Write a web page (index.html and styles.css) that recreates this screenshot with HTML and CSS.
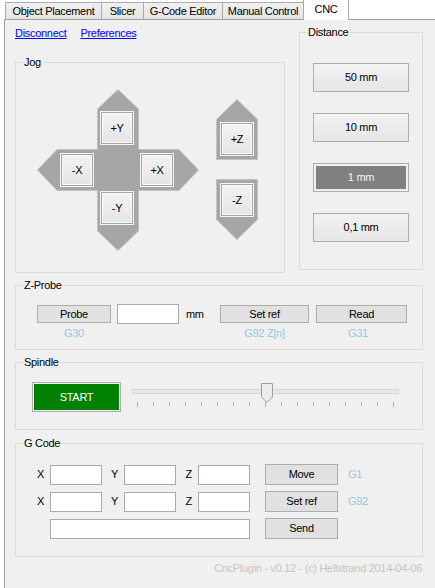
FILE: index.html
```html
<!DOCTYPE html>
<html>
<head>
<meta charset="utf-8">
<title>CNC</title>
<link rel="stylesheet" href="styles.css">
</head>
<body>
<div class="tabs">
  <div class="tab tab-obj">Object Placement</div>
  <div class="tab tab-slicer">Slicer</div>
  <div class="tab tab-gcode">G-Code Editor</div>
  <div class="tab tab-manual">Manual Control</div>
  <div class="tab tab-cnc active">CNC</div>
</div>
<div class="page">
  <div class="top">
    <div class="left-col">
      <div class="links"><a href="#">Disconnect</a><a href="#">Preferences</a></div>
      <div class="group jog">
        <div class="group-title">Jog</div>
        <div class="jog-body">
          <div class="dpad">
            <svg class="shape" width="162" height="162" viewBox="0 0 162 162"><polygon points="81,0.5 101.5,20 101.5,60.5 142,60.5 161.5,81 142,101.5 101.5,101.5 101.5,142 81,161.5 60.5,142 60.5,101.5 20,101.5 0.5,81 20,60.5 60.5,60.5 60.5,20"/></svg>
            <button class="jbtn py">+Y</button>
            <button class="jbtn mx">-X</button>
            <button class="jbtn px">+X</button>
            <button class="jbtn my">-Y</button>
          </div>
          <div class="zcol">
            <div class="zarrow">
              <svg class="shape" width="42" height="61" viewBox="0 0 42 61"><polygon points="21,0.5 41.5,20.5 41.5,60.5 0.5,60.5 0.5,20.5"/></svg>
              <button class="jbtn pz">+Z</button>
            </div>
            <div class="zarrow">
              <svg class="shape" width="42" height="61" viewBox="0 0 42 61"><polygon points="0.5,0.5 41.5,0.5 41.5,40.5 21,60.5 0.5,40.5"/></svg>
              <button class="jbtn mz">-Z</button>
            </div>
          </div>
        </div>
      </div>
    </div>
    <div class="group distance">
      <div class="group-title">Distance</div>
      <div class="dist-list">
        <button class="dbtn">50 mm</button>
        <button class="dbtn">10 mm</button>
        <button class="dbtn selected"><span>1 mm</span></button>
        <button class="dbtn">0,1 mm</button>
      </div>
    </div>
  </div>

  <div class="group zprobe">
    <div class="group-title">Z-Probe</div>
    <div class="zp-grid">
      <button class="btn zp-probe">Probe</button>
      <input class="field zp-input" type="text">
      <span class="zp-mm">mm</span>
      <button class="btn zp-setref">Set ref</button>
      <button class="btn zp-read">Read</button>
      <span class="gcode-hint c1">G30</span>
      <span class="gcode-hint c4">G92 Z[n]</span>
      <span class="gcode-hint c5">G31</span>
    </div>
  </div>

  <div class="group spindle">
    <div class="group-title">Spindle</div>
    <div class="sp-row">
      <button class="start"><span>START</span></button>
      <div class="slider">
        <div class="track"></div>
        <svg class="thumb" width="12" height="20" viewBox="0 0 12 20"><polygon points="0.5,0.5 11.5,0.5 11.5,14 6,19.5 0.5,14"/></svg>
        <div class="ticks">
          <i class="tick end"></i><i class="tick"></i><i class="tick"></i><i class="tick"></i><i class="tick"></i><i class="tick"></i><i class="tick"></i><i class="tick"></i><i class="tick end"></i><i class="tick"></i><i class="tick"></i><i class="tick"></i><i class="tick"></i><i class="tick"></i><i class="tick"></i><i class="tick"></i><i class="tick end"></i>
        </div>
      </div>
    </div>
  </div>

  <div class="group gcode">
    <div class="group-title">G Code</div>
    <div class="gc-grid">
      <span class="axis">X</span><input class="field" type="text">
      <span class="axis">Y</span><input class="field" type="text">
      <span class="axis">Z</span><input class="field" type="text">
      <span></span><button class="btn">Move</button><span class="gcode-hint gc-hint">G1</span>

      <span class="axis">X</span><input class="field" type="text">
      <span class="axis">Y</span><input class="field" type="text">
      <span class="axis">Z</span><input class="field" type="text">
      <span></span><button class="btn">Set ref</button><span class="gcode-hint gc-hint">G92</span>

      <span></span><input class="field wide" type="text">
      <span></span><button class="btn">Send</button>
    </div>
  </div>

  <div class="footer">CncPlugin - v0.12 - (c) Hellstrand 2014-04-06</div>
</div>
</body>
</html>
```

FILE: styles.css
```css
* { box-sizing: border-box; }

html, body {
  margin: 0;
  padding: 0;
}

body {
  width: 435px;
  height: 588px;
  overflow: hidden;
  background: #ffffff;
  font-family: "Liberation Sans", Arial, sans-serif;
  font-size: 11px;
  line-height: 13px;
  letter-spacing: -0.3px;
  color: #000;
}

button, input {
  font: inherit;
  letter-spacing: inherit;
  color: inherit;
  margin: 0;
  padding: 0;
}

/* ---------- tabs ---------- */
.tabs {
  display: flex;
  align-items: flex-end;
  height: 19px;
  padding-left: 5px;
}

.tab {
  height: 17px;
  border: 1px solid #acacac;
  border-bottom: none;
  background: linear-gradient(#f0f0f0, #e5e5e5);
  text-align: center;
  line-height: 16px;
  margin-left: -1px;
  white-space: nowrap;
}

.tab:first-child { margin-left: 0; }
.tab-obj { width: 97px; }
.tab-slicer { width: 43px; }
.tab-gcode { width: 80px; }
.tab-manual { width: 82px; }

.tab.active {
  position: relative;
  z-index: 1;
  width: 46px;
  height: 20px;
  margin-bottom: -1px;
  border-top: none;
  background: #ffffff;
  line-height: 19px;
}

/* ---------- page ---------- */
.page {
  margin-left: 4px;
  height: 569px;
  border-left: 1px solid #9a9a9a;
  border-top: 1px solid #a0a0a0;
  background: #f0f0f0;
  padding: 0 12px 0 10px;
}

.top {
  display: flex;
  justify-content: space-between;
  align-items: flex-start;
}

.left-col { width: 270px; }

.links {
  padding-top: 7px;
  display: flex;
}

.links a {
  color: #0000ff;
  text-decoration: underline;
  margin-right: 14px;
}

/* ---------- group boxes ---------- */
.group {
  border: 1px solid #dcdcdc;
}

.group-title {
  display: table;
  margin: -7px 0 0 7px;
  padding: 0 1px;
  background: #f0f0f0;
  line-height: 13px;
}

.jog {
  margin-top: 22px;
  height: 211px;
}

.distance {
  margin-top: 12px;
  width: 124px;
  height: 238px;
}

.zprobe {
  margin-top: 12px;
  height: 65px;
}

.spindle {
  margin-top: 12px;
  height: 68px;
}

.gcode {
  margin-top: 13px;
  height: 114px;
}

/* ---------- jog ---------- */
.jog-body {
  display: flex;
  align-items: flex-start;
  padding: 20px 0 0 21px;
}

.dpad {
  position: relative;
  width: 162px;
  height: 162px;
}

.shape {
  position: absolute;
  left: 0;
  top: 0;
  display: block;
}

.shape polygon {
  fill: #a6a6a6;
  stroke: #c2c2c2;
  stroke-width: 1;
}

.jbtn {
  position: absolute;
  width: 34px;
  height: 34px;
  border: 1px solid #f6f6f6;
  box-shadow: inset 0 0 0 1px #a3a3a3, inset 0 0 0 2px #fbfbfb;
  background: linear-gradient(#f3f3f3, #e4e4e4);
  text-align: center;
  line-height: 30px;
}

.py { left: 63px; top: 22px; }
.mx { left: 23px; top: 64px; }
.px { left: 103px; top: 64px; }
.my { left: 63px; top: 102px; }

.zcol {
  margin: 10px 0 0 17px;
  display: flex;
  flex-direction: column;
  gap: 19px;
}

.zarrow {
  position: relative;
  width: 42px;
  height: 61px;
}

.pz { left: 4px; top: 23px; }
.mz { left: 4px; top: 4px; }

/* ---------- distance ---------- */
.dist-list {
  display: flex;
  flex-direction: column;
  gap: 21px;
  padding: 24px 0 0 13px;
}

.dbtn {
  width: 96px;
  height: 29px;
  border: 1px solid #adadad;
  background: linear-gradient(#f2f2f2, #e6e6e6);
  text-align: center;
}

.dbtn.selected {
  padding: 2px;
  background: #f0f0f0;
}

.dbtn.selected span {
  display: block;
  height: 100%;
  background: #808080;
  color: #f4f4f4;
  line-height: 23px;
}

/* ---------- generic controls ---------- */
.btn {
  border: 1px solid #adadad;
  background: #e1e1e1;
  text-align: center;
}

.field {
  height: 20px;
  border: 1px solid #a9a9a9;
  background: #ffffff;
  outline: none;
}

.gcode-hint {
  color: #8ecbe6;
}

/* ---------- z-probe ---------- */
.zp-grid {
  display: grid;
  grid-template-columns: 74px 68px 41px 96px 91px;
  grid-template-rows: 20px 13px;
  row-gap: 3px;
  align-items: center;
  padding: 12px 0 0 21px;
}

.zp-grid .btn { height: 18px; }
.zp-probe { width: 74px; }
.zp-input { width: 62px; margin-left: 6px; }
.zp-mm { margin-left: 7px; }
.zp-setref { width: 89px; }
.zp-read { width: 91px; }

.c1 { grid-column: 1; justify-self: center; }
.c4 { grid-column: 4; width: 89px; text-align: center; }
.c5 { grid-column: 5; margin-left: 32px; }

/* ---------- spindle ---------- */
.sp-row {
  display: flex;
  align-items: flex-start;
  padding: 13px 0 0 16px;
}

.start {
  width: 89px;
  height: 30px;
  border: 1px solid #adadad;
  padding: 1px;
  background: #f0f0f0;
}

.start span {
  display: block;
  height: 100%;
  background: #008000;
  color: #ffffff;
  line-height: 26px;
  text-align: center;
}

.slider {
  position: relative;
  width: 267px;
  height: 25px;
  margin: 1px 0 0 11px;
}

.track {
  margin-top: 6px;
  height: 5px;
  border: 1px solid #d6d6d6;
  background: #e7e7e7;
}

.thumb {
  position: absolute;
  left: 129px;
  top: 0;
  display: block;
}

.thumb polygon {
  fill: #ececec;
  stroke: #9d9d9d;
  stroke-width: 1;
}

.ticks {
  display: flex;
  justify-content: space-between;
  align-items: flex-start;
  padding: 0 5px;
  margin-top: 8px;
}

.tick {
  display: block;
  width: 1px;
  height: 4px;
  background: #b4b4b4;
}

.tick.end { height: 5px; }

/* ---------- g code ---------- */
.gc-grid {
  display: grid;
  grid-template-columns: 13px 52px 22px 52px 22px 52px 15px 73px auto;
  grid-auto-rows: 21px;
  row-gap: 6px;
  align-items: center;
  padding: 14px 0 0 21px;
}

.axis {
  justify-self: end;
  padding-right: 6px;
}

.gc-grid .btn { height: 21px; }

.gc-grid .field { width: 52px; }

.gc-grid .field.wide {
  grid-column: 2 / 7;
  width: 200px;
}

.gc-hint { padding-left: 10px; }

/* ---------- footer ---------- */
.footer {
  margin-top: 5px;
  text-align: right;
  padding-right: 1px;
  color: #c4c4c4;
}
```
